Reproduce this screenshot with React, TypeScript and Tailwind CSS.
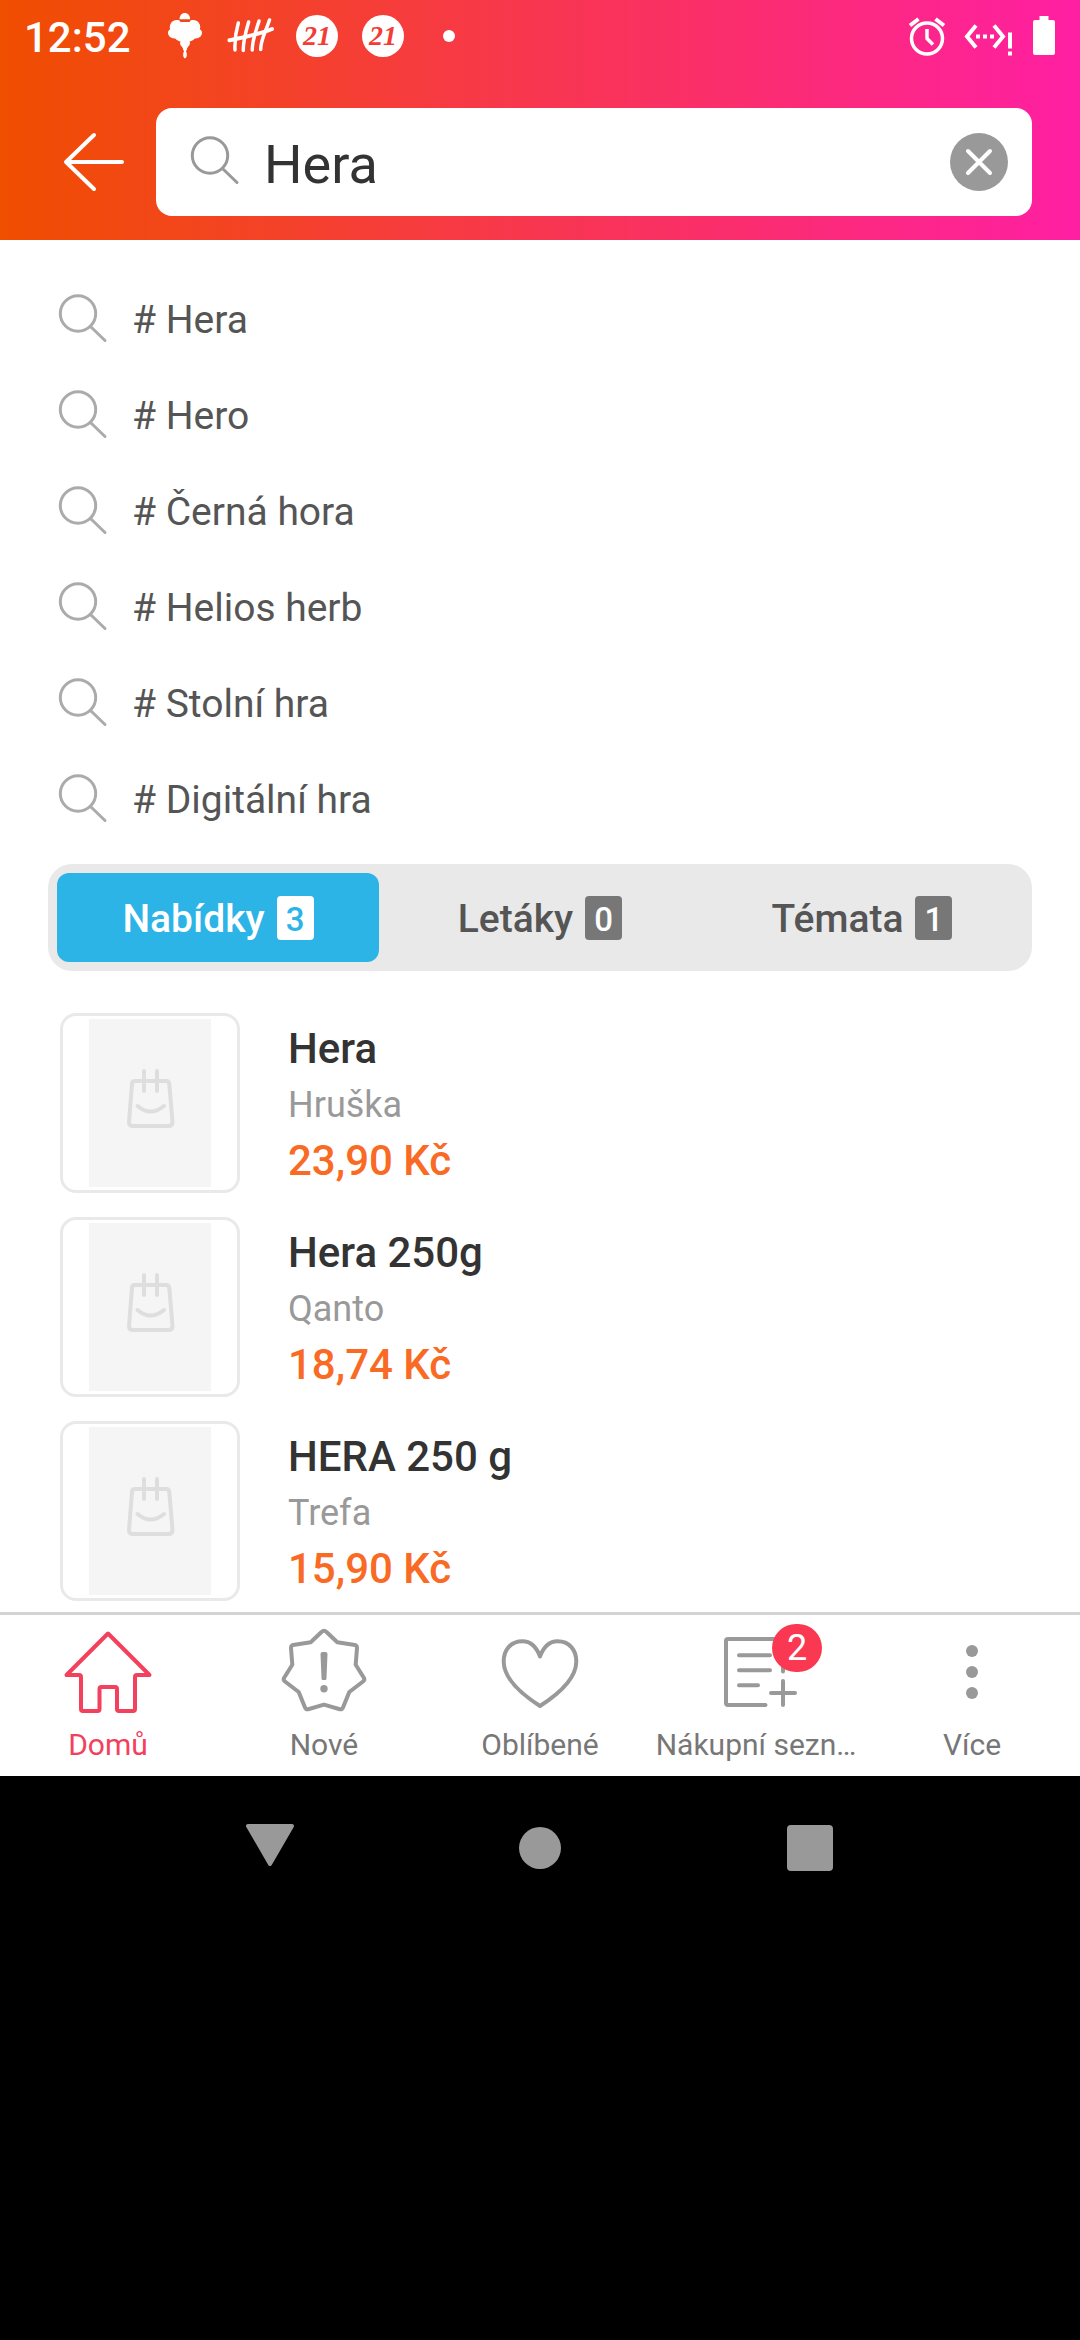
import { useState, type ReactNode } from "react";

const suggestions = ["Hera", "Hero", "Černá hora", "Helios herb", "Stolní hra", "Digitální hra"];

const tabs = [
  { label: "Nabídky", count: 3 },
  { label: "Letáky", count: 0 },
  { label: "Témata", count: 1 },
];

const offers = [
  { name: "Hera", shop: "Hruška", price: "23,90 Kč" },
  { name: "Hera 250g", shop: "Qanto", price: "18,74 Kč" },
  { name: "HERA 250 g", shop: "Trefa", price: "15,90 Kč" },
];

function SearchIcon({ className }: { className: string }) {
  return (
    <svg viewBox="0 0 56 56" className={`size-14 shrink-0 ${className}`} fill="none" stroke="currentColor" strokeWidth="3" strokeLinecap="round" aria-hidden="true">
      <circle cx="22" cy="21.500" r="17.700" />
      <path d="M35 35 49 48.500" />
    </svg>
  );
}

function LanternIcon() {
  return (
    <svg viewBox="0 0 48 48" className="size-12" fill="currentColor" aria-hidden="true">
      <path d="M18.500 7.200c0-3.500 2.200-6.200 5.300-6.200s5.300 2.700 5.300 6.200z" />
      <path d="M9.500 12c1.500-3.600 5.500-4.800 9-3.600l1 1.700h9l1-1.700c3.500-1.200 7.500 0 9 3.600 1 2 .8 4 .3 5.300 2 1 2.700 3 2 5-1 3-4 4.300-7 4.200-1.500 1.800-3.600 2.800-5.300 3 .6 1.300.5 2.700-.2 3.700-.8 1.200-1.800 2-2.300 3.300-.2 1.500 0 2.200-1.300 2.200 1 1.300 2.300 5.800-.7 7.800-3-2-1.700-6.500-.7-7.800-1.300 0-1.100-.7-1.300-2.200-.5-1.300-1.500-2.100-2.300-3.300-.7-1-.8-2.400-.2-3.700-1.700-.2-3.800-1.200-5.300-3-3 .1-6-1.200-7-4.200-.7-2 0-4 2-5-.5-1.300-.7-3.300.3-5.300z" />
    </svg>
  );
}

function TallyIcon() {
  return (
    <svg viewBox="0 0 48 48" className="size-12" fill="none" stroke="currentColor" strokeWidth="3.500" strokeLinecap="round" aria-hidden="true">
      <path d="M11.300 11C9 19 7.500 28 8 38M21.600 10C19 19 16 29 16.300 38.500M32 9C29 19 25 29 25.300 38M42.500 8C39 19 33.500 28 33.700 37.500" />
      <path d="M2.500 28.300C18 25 32 22.500 45 17" strokeWidth="4" />
    </svg>
  );
}

function DayIcon() {
  return (
    <span className="flex size-[42px] items-center justify-center rounded-full bg-white font-['Liberation_Serif',serif] text-[28px] leading-none font-bold text-[#f23c34] italic">
      21
    </span>
  );
}

function HomeIcon() {
  return <path d="M48 9.500 6.500 51H19q2 0 2 2V85q0 2 2 2H37.500q2 0 2-2V65q0-2 2-2H55q2 0 2 2V85q0 2 2 2H73q2 0 2-2V53q0-2 2-2H89.500Z" />;
}

function NewIcon() {
  return (
    <>
      <path d="M45.500 8Q48 5.500 50.500 8L61.300 18.300 79 21Q81 21.500 81 24L79.700 40.700 88 54Q89 56 87 57.500L73.300 68 67 83.500Q66 86 63 85L48 80.700 33 85Q30 86 29 83.500L22.700 68 9 57.500Q7 56 8 54L16.300 40.700 15 24Q15 21.500 17 21L34.700 18.300Z" />
      <path d="M44.500 30q0-2 2-2h3q2 0 2 2L50.500 54q0 2-1 2h-3q-1 0-1-2Z" fill="currentColor" stroke="none" />
      <circle cx="48" cy="64.700" r="3.700" fill="currentColor" stroke="none" />
    </>
  );
}

function HeartIcon() {
  return <path d="M48 32.500C44 22 38 17.300 30.500 17.300C18.500 17.300 11.700 26 11.700 37.500C11.700 53 27 68.500 48 82C69 68.500 84.300 53 84.300 37.500C84.300 26 77.500 17.300 65.500 17.300C58 17.300 52 22 48 32.500Z" />;
}

function ListIcon() {
  return <path d="M75 47.500V17q0-2-2-2H20q-2 0-2 2V79q0 2 2 2H57.500M31 31.300H62M31 46.300H62M31 61.300H50M63 69H87M75 57V81" />;
}

function MoreIcon() {
  return (
    <g fill="currentColor" stroke="none">
      <circle cx="48" cy="27" r="6" />
      <circle cx="48" cy="48" r="6" />
      <circle cx="48" cy="69" r="6" />
    </g>
  );
}

const navItems: { label: string; icon: ReactNode; badge?: number }[] = [
  { label: "Domů", icon: <HomeIcon /> },
  { label: "Nové", icon: <NewIcon /> },
  { label: "Oblíbené", icon: <HeartIcon /> },
  { label: "Nákupní sezn…", icon: <ListIcon />, badge: 2 },
  { label: "Více", icon: <MoreIcon /> },
];

function StatusBar() {
  return (
    <div className="flex h-[72px] items-center justify-between px-6">
      <div className="flex items-center">
        <span className="w-32 pt-1 text-[42px] leading-none font-medium">12:52</span>
        <span className="flex w-[66px] justify-center"><LanternIcon /></span>
        <span className="flex w-[66px] justify-center"><TallyIcon /></span>
        <span className="flex w-[66px] justify-center"><DayIcon /></span>
        <span className="flex w-[66px] justify-center"><DayIcon /></span>
        <span className="flex w-[66px] justify-center"><span className="size-3 rounded-full bg-white" /></span>
      </div>
      <div className="flex items-center gap-3.5">
        <svg viewBox="0 0 48 48" className="size-12" fill="none" stroke="currentColor" strokeWidth="3.500" aria-hidden="true">
          <circle cx="25" cy="26.500" r="15.500" />
          <path d="M25 17v9.500l6 6" />
          <path d="M8 13.500 16.500 7M42 13.500 33.500 7" strokeWidth="4" />
        </svg>
        <svg viewBox="0 0 54 48" className="h-12 w-[54px]" fill="none" stroke="currentColor" strokeWidth="4" aria-hidden="true">
          <path d="M12 13.500 3 24.500 12 35.500M30 13.500 39 24.500 30 35.500" />
          <path d="M12 24.500h4M19 24.500h4M26 24.500h4" />
          <path d="M46 20.500v16M46 39.500v4" />
        </svg>
        <svg viewBox="0 0 24 48" className="h-12 w-6" fill="currentColor" aria-hidden="true">
          <path d="M7.500 4h9v4H21q2 0 2 2V41q0 2-2 2H3q-2 0-2-2V10q0-2 2-2H7.500Z" />
        </svg>
      </div>
    </div>
  );
}

export default function App() {
  const [query, setQuery] = useState("Hera");
  const [activeTab, setActiveTab] = useState("Nabídky");

  return (
    <div className="flex min-h-screen flex-col bg-black font-['Roboto',sans-serif]">
      <header className="bg-linear-to-r/srgb from-[#f04e00] via-[#f83650] to-[#ff1fa3] text-white">
        <StatusBar />
        <div className="flex items-center pt-9 pr-12 pb-6 pl-15">
          <button type="button" aria-label="Zpět" className="mr-8 shrink-0">
            <svg viewBox="0 0 64 64" className="size-16" fill="none" stroke="currentColor" strokeWidth="4" strokeLinecap="round" strokeLinejoin="round" aria-hidden="true">
              <path d="M34 5 6 32 34 59M6 32H62" />
            </svg>
          </button>
          <div className="flex h-[108px] min-w-0 flex-1 items-center rounded-2xl bg-white pr-6 pl-8">
            <SearchIcon className="text-[#999999]" />
            <input
              type="text"
              aria-label="Hledat"
              value={query}
              onChange={(e) => setQuery(e.target.value)}
              className="ml-5 min-w-0 flex-1 bg-transparent pt-1 text-[54px] text-[#333333] outline-none"
            />
            <button type="button" aria-label="Smazat" onClick={() => setQuery("")} className="flex size-[58px] shrink-0 items-center justify-center rounded-full bg-[#999999]">
              <svg viewBox="0 0 32 32" className="size-8" stroke="currentColor" strokeWidth="4" strokeLinecap="round" aria-hidden="true">
                <path d="M5 5 27 27M27 5 5 27" />
              </svg>
            </button>
          </div>
        </div>
      </header>

      <main className="bg-white pt-8 pb-[11px]">
        <ul>
          {suggestions.map((s) => (
            <li key={s}>
              <a href="#" className="flex h-24 items-center gap-5 px-14 text-[39px] text-[#555555]">
                <SearchIcon className="text-[#ababab]" />
                # {s}
              </a>
            </li>
          ))}
        </ul>

        <div role="tablist" className="mx-12 mt-4 flex rounded-3xl bg-[#e9e9e9] p-[9px]">
          {tabs.map((t) => {
            const active = t.label === activeTab;
            return (
              <button
                key={t.label}
                type="button"
                role="tab"
                aria-selected={active}
                onClick={() => setActiveTab(t.label)}
                className={`flex h-[89px] flex-1 items-center justify-center gap-3 rounded-xl text-[39px] font-medium ${active ? "bg-[#2db4e7] text-white" : "text-[#555555]"}`}
              >
                <span className="pt-1">{t.label}</span>
                <span className={`flex h-11 w-[37px] items-center justify-center rounded pt-1 text-[33px] leading-none ${active ? "bg-white text-[#2db4e7]" : "bg-[#777777] text-white"}`}>
                  {t.count}
                </span>
              </button>
            );
          })}
        </div>

        <ul className="mt-[42px] flex flex-col gap-6 px-15">
          {offers.map((o) => (
            <li key={o.name}>
              <a href="#" className="flex items-center gap-12">
                <span className="flex size-[180px] shrink-0 items-center justify-center rounded-2xl border-3 border-[#e9e9e9]">
                  <svg viewBox="0 0 122 168" className="h-[168px] w-[122px] bg-[#f5f5f5]" fill="none" stroke="#dedede" strokeWidth="4" strokeLinecap="round" strokeLinejoin="round" aria-hidden="true">
                    <path d="M46 62H77q3 0 3.300 3L83.500 103q0 4-4 4H44q-4 0-4-4L43 65q0-3 3-3ZM55 52V72M68 52V72M48.500 87Q61.500 98 75 87" />
                  </svg>
                </span>
                <span className="flex min-w-0 flex-col pt-1">
                  <span className="text-[42px] leading-[56px] font-medium text-[#333333]">{o.name}</span>
                  <span className="text-[36px] leading-[56px] text-[#999999]">{o.shop}</span>
                  <span className="text-[42px] leading-[56px] font-medium text-[#f96a25]">{o.price}</span>
                </span>
              </a>
            </li>
          ))}
        </ul>
      </main>

      <nav className="flex border-t-3 border-[#d3d3d3] bg-white">
        {navItems.map((n, i) => (
          <a key={n.label} href="#" className={`flex min-w-0 flex-1 basis-0 flex-col items-center px-1 pt-[9px] pb-[13px] ${i === 0 ? "text-[#f3405c]" : "text-[#999999]"}`}>
            <span className="relative">
              <svg viewBox="0 0 96 96" className="size-24" fill="none" stroke="currentColor" strokeWidth="4" strokeLinecap="round" strokeLinejoin="round" aria-hidden="true">
                {n.icon}
              </svg>
              {n.badge && (
                <span className="absolute top-0 left-16 flex h-12 w-[50px] items-center justify-center rounded-full bg-[#fa3852] text-[36px] leading-none text-white">{n.badge}</span>
              )}
            </span>
            <span className={`mt-[7px] text-[30px] leading-9 whitespace-nowrap ${i === 0 ? "" : "text-[#777777]"}`}>{n.label}</span>
          </a>
        ))}
      </nav>

      <div className="flex px-[135px] pt-[42px] text-[#999999]">
        <button type="button" aria-label="Zpět" className="flex flex-1 justify-center">
          <svg viewBox="0 0 60 60" className="size-15" fill="currentColor" stroke="currentColor" strokeWidth="4" strokeLinejoin="round" aria-hidden="true">
            <path d="M8 8H52L30 46Z" />
          </svg>
        </button>
        <button type="button" aria-label="Plocha" className="flex flex-1 justify-center">
          <svg viewBox="0 0 60 60" className="size-15" fill="currentColor" aria-hidden="true">
            <circle cx="30" cy="30" r="21" />
          </svg>
        </button>
        <button type="button" aria-label="Poslední aplikace" className="flex flex-1 justify-center">
          <svg viewBox="0 0 60 60" className="size-15" fill="currentColor" aria-hidden="true">
            <rect x="7" y="7" width="46" height="46" rx="4" />
          </svg>
        </button>
      </div>
    </div>
  );
}
